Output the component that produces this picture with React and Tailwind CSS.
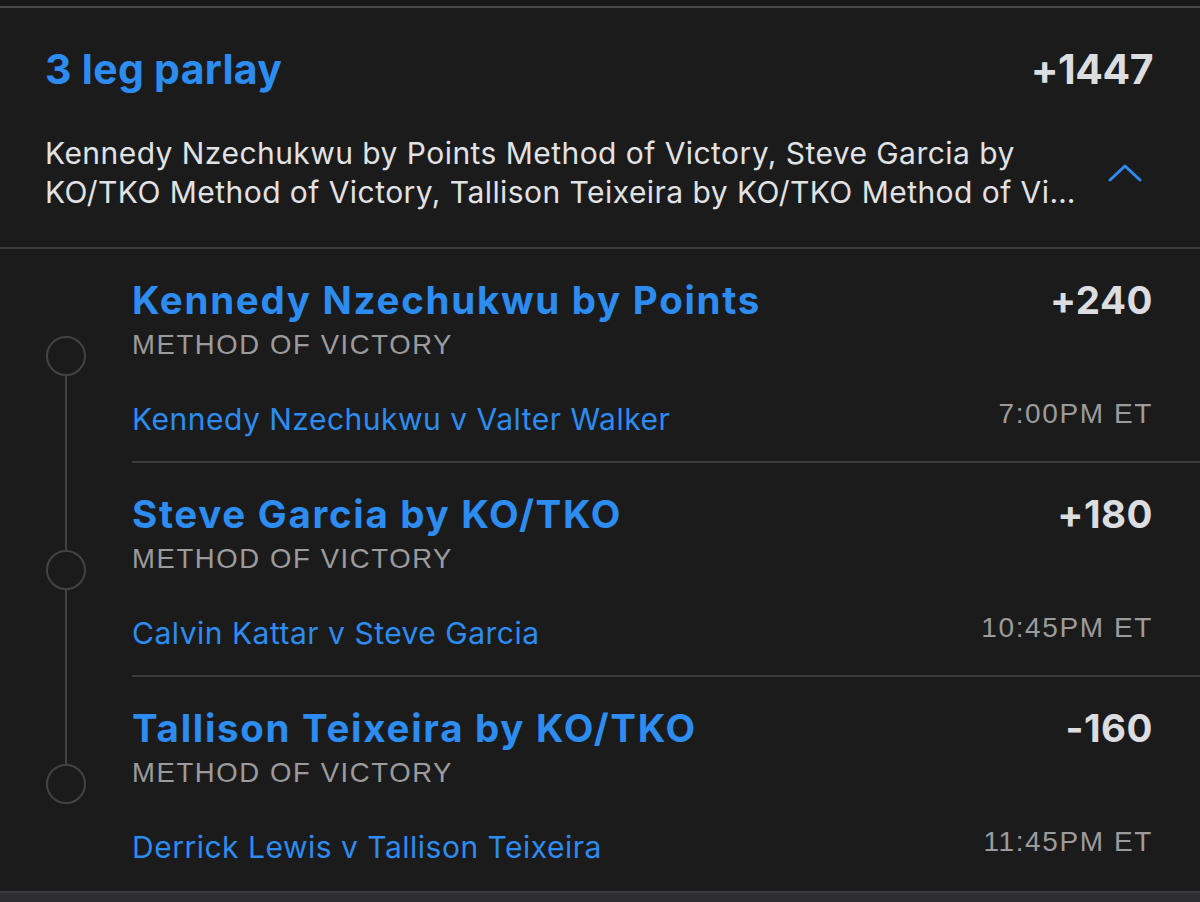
import React from 'react';

const legs = [
  {
    title: 'Kennedy Nzechukwu by Points',
    odds: '+240',
    market: 'METHOD OF VICTORY',
    matchup: 'Kennedy Nzechukwu v Valter Walker',
    time: '7:00PM ET',
  },
  {
    title: 'Steve Garcia by KO/TKO',
    odds: '+180',
    market: 'METHOD OF VICTORY',
    matchup: 'Calvin Kattar v Steve Garcia',
    time: '10:45PM ET',
  },
  {
    title: 'Tallison Teixeira by KO/TKO',
    odds: '-160',
    market: 'METHOD OF VICTORY',
    matchup: 'Derrick Lewis v Tallison Teixeira',
    time: '11:45PM ET',
  },
];

const ChevronUp = () => (
  <svg width="34" height="20" viewBox="0 0 34 20" fill="none">
    <path d="M2 17 L17 3 L32 17" stroke="#2d8cf0" strokeWidth="3" strokeLinecap="round" strokeLinejoin="round" />
  </svg>
);

const Leg = ({ leg, first, last }) => (
  <div className="flex">
    {/* timeline */}
    <div className="w-[132px] flex flex-col items-center shrink-0">
      <div className={`w-[2px] h-[87px] ${first ? 'bg-transparent' : 'bg-[#434345]'}`} />
      <div className="w-[40px] h-[40px] rounded-full border-2 border-[#434345] shrink-0" />
      <div className={`w-[2px] flex-1 ${last ? 'bg-transparent' : 'bg-[#434345]'}`} />
    </div>

    <div className={`flex-1 pr-[47px] pt-[30px] pb-[24px] ${last ? 'border-b-2 border-transparent' : 'border-b-2 border-[#3c3c3e]'}`}>
      <div className="flex justify-between items-center h-[44px]">
        <span className="text-[38.5px] font-bold text-[#2d8cf0] tracking-[1.7px]">{leg.title}</span>
        <span className="text-[38.5px] font-bold text-[#dcdde0] tracking-[0.5px]">{leg.odds}</span>
      </div>
      <div className="mt-[6px] h-[32px] leading-[32px] text-[27.5px] text-[#9b9b9d] tracking-[1.6px] font-['Liberation_Sans',sans-serif]">
        {leg.market}
      </div>
      <div className="mt-[40px] h-[36px] flex justify-between items-center">
        <span className="text-[30px] text-[#2d8cf0] tracking-[0.5px]">{leg.matchup}</span>
        <span className="text-[28px] text-[#9b9b9d] tracking-[1.6px] -mt-[10px] font-['Liberation_Sans',sans-serif]">
          {leg.time}
        </span>
      </div>
    </div>
  </div>
);

export default function App() {
  return (
    <div className="w-[1200px] h-[902px] overflow-hidden bg-[#1b1b1c] font-['Inter',sans-serif] flex flex-col">
      <div className="h-[6px] bg-[#19191a]" />
      <div className="h-[2px] bg-[#4a4a4c]" />

      {/* header */}
      <div className="pl-[45px] pr-[47px] pt-[40px] pb-[35px] border-b-2 border-[#3c3c3e]">
        <div className="flex justify-between items-center h-[44px]">
          <span className="text-[41px] font-bold text-[#2d8cf0] tracking-[0.3px]">3 leg parlay</span>
          <span className="text-[41px] font-bold text-[#dcdde0] tracking-[-0.5px]">+1447</span>
        </div>
        <div className="mt-[42px] flex items-center">
          <div className="w-[1036px] text-[30px] leading-[39px] tracking-[0.45px] text-[#e1e2e5]">
            <div className="whitespace-nowrap">Kennedy Nzechukwu by Points Method of Victory, Steve Garcia by</div>
            <div className="whitespace-nowrap overflow-hidden text-ellipsis">
              KO/TKO Method of Victory, Tallison Teixeira by KO/TKO Method of Victory
            </div>
          </div>
          <div className="flex-1 flex justify-end pr-[11px]">
            <ChevronUp />
          </div>
        </div>
      </div>

      {legs.map((leg, i) => (
        <Leg key={i} leg={leg} first={i === 0} last={i === legs.length - 1} />
      ))}

      <div className="flex-1 bg-[#2e2e30] border-t-2 border-[#3a3a3c]" />
    </div>
  );
}
